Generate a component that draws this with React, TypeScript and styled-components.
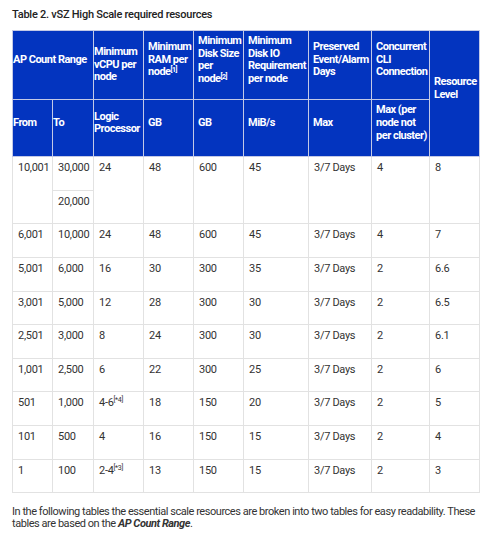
import React from "react";
import styled, { createGlobalStyle } from "styled-components";

const GlobalStyle = createGlobalStyle`
  body {
    margin: 0;
    background: #ffffff;
    font-family: Roboto, "Liberation Sans", sans-serif;
  }
`;

const Page = styled.div`
  padding: 8px 6px 0 12px;
  width: 494px;
  box-sizing: border-box;
`;

const Caption = styled.div`
  font-size: 11px;
  font-weight: 500;
  color: #222;
  line-height: 14px;
  letter-spacing: -0.25px;
  margin-bottom: 8px;
`;

const Table = styled.table`
  border-collapse: collapse;
  table-layout: fixed;
  width: 467px;
`;

const HeadRow = styled.tr<{ $h: number }>`
  height: ${(p) => p.$h}px;
`;

const HeadCell = styled.th<{ $tight?: boolean; $mid?: boolean }>`
  background: #0334bf;
  color: #ffffff;
  font-size: 11px;
  font-weight: 700;
  line-height: 12.6px;
  letter-spacing: -0.5px;
  text-align: left;
  vertical-align: middle;
  border: 1px solid #c3c9e6;
  padding: ${(p) => (p.$mid ? "9px" : "4px")} 0 ${(p) => (p.$mid ? "9px" : "14px")}
    ${(p) => (p.$tight ? "0" : "4px")};
  sup {
    font-size: 7px;
    line-height: 0;
    vertical-align: 3px;
  }
`;

const Cell = styled.td`
  font-size: 11px;
  color: #333;
  line-height: 14px;
  letter-spacing: -0.3px;
  vertical-align: top;
  border: 1px solid #e2e2e2;
  padding: 4px 4px 14.6px 5px;
  sup {
    font-size: 7px;
    line-height: 0;
    vertical-align: 4px;
  }
`;

const Note = styled.p`
  margin: 13px 0 0 0;
  font-size: 11px;
  line-height: 12px;
  color: #333;
  letter-spacing: -0.45px;
  em {
    font-weight: 700;
  }
`;

type Row = {
  from: string;
  to: string;
  vcpu: React.ReactNode;
  ram: string;
  disk: string;
  io: string;
  cli: string;
  level: string;
};

const rows: Row[] = [
  { from: "6,001", to: "10,000", vcpu: "24", ram: "48", disk: "600", io: "45", cli: "4", level: "7" },
  { from: "5,001", to: "6,000", vcpu: "16", ram: "30", disk: "300", io: "35", cli: "2", level: "6.6" },
  { from: "3,001", to: "5,000", vcpu: "12", ram: "28", disk: "300", io: "30", cli: "2", level: "6.5" },
  { from: "2,501", to: "3,000", vcpu: "8", ram: "24", disk: "300", io: "30", cli: "2", level: "6.1" },
  { from: "1,001", to: "2,500", vcpu: "6", ram: "22", disk: "300", io: "25", cli: "2", level: "6" },
  {
    from: "501",
    to: "1,000",
    vcpu: (
      <>
        4-6<sup>[*4]</sup>
      </>
    ),
    ram: "18",
    disk: "150",
    io: "20",
    cli: "2",
    level: "5",
  },
  { from: "101", to: "500", vcpu: "4", ram: "16", disk: "150", io: "15", cli: "2", level: "4" },
  {
    from: "1",
    to: "100",
    vcpu: (
      <>
        2-4<sup>[*3]</sup>
      </>
    ),
    ram: "13",
    disk: "150",
    io: "15",
    cli: "2",
    level: "3",
  },
];

const widths = [40, 41, 50, 50, 50, 65, 63, 58, 50];

export default function App() {
  return (
    <Page>
      <GlobalStyle />
      <Caption>Table 2. vSZ High Scale required resources</Caption>
      <Table>
        <colgroup>
          {widths.map((w, i) => (
            <col key={i} style={{ width: w }} />
          ))}
        </colgroup>
        <thead>
          <HeadRow $h={69}>
            <HeadCell colSpan={2} $tight>
              AP Count Range
            </HeadCell>
            <HeadCell $tight $mid>
              Minimum vCPU per node
            </HeadCell>
            <HeadCell>
              Minimum RAM per node<sup>[1]</sup>
            </HeadCell>
            <HeadCell>
              Minimum Disk Size per node<sup>[2]</sup>
            </HeadCell>
            <HeadCell>Minimum Disk IO Requirement per node</HeadCell>
            <HeadCell>Preserved Event/Alarm Days</HeadCell>
            <HeadCell>Concurrent CLI Connection</HeadCell>
            <HeadCell rowSpan={2}>Resource Level</HeadCell>
          </HeadRow>
          <HeadRow $h={56}>
            <HeadCell $tight>From</HeadCell>
            <HeadCell $tight>To</HeadCell>
            <HeadCell $tight>Logic Processor</HeadCell>
            <HeadCell>GB</HeadCell>
            <HeadCell>GB</HeadCell>
            <HeadCell>MiB/s</HeadCell>
            <HeadCell>Max</HeadCell>
            <HeadCell>Max (per node not per cluster)</HeadCell>
          </HeadRow>
        </thead>
        <tbody>
          <tr>
            <Cell rowSpan={2}>10,001</Cell>
            <Cell>30,000</Cell>
            <Cell rowSpan={2}>24</Cell>
            <Cell rowSpan={2}>48</Cell>
            <Cell rowSpan={2}>600</Cell>
            <Cell rowSpan={2}>45</Cell>
            <Cell rowSpan={2}>3/7 Days</Cell>
            <Cell rowSpan={2}>4</Cell>
            <Cell rowSpan={2}>8</Cell>
          </tr>
          <tr>
            <Cell>20,000</Cell>
          </tr>
          {rows.map((r) => (
            <tr key={r.from}>
              <Cell>{r.from}</Cell>
              <Cell>{r.to}</Cell>
              <Cell>{r.vcpu}</Cell>
              <Cell>{r.ram}</Cell>
              <Cell>{r.disk}</Cell>
              <Cell>{r.io}</Cell>
              <Cell>3/7 Days</Cell>
              <Cell>{r.cli}</Cell>
              <Cell>{r.level}</Cell>
            </tr>
          ))}
        </tbody>
      </Table>
      <Note>
        In the following tables the essential scale resources are broken into two tables for easy
        readability. These tables are based on the <em>AP Count Range</em>.
      </Note>
    </Page>
  );
}
